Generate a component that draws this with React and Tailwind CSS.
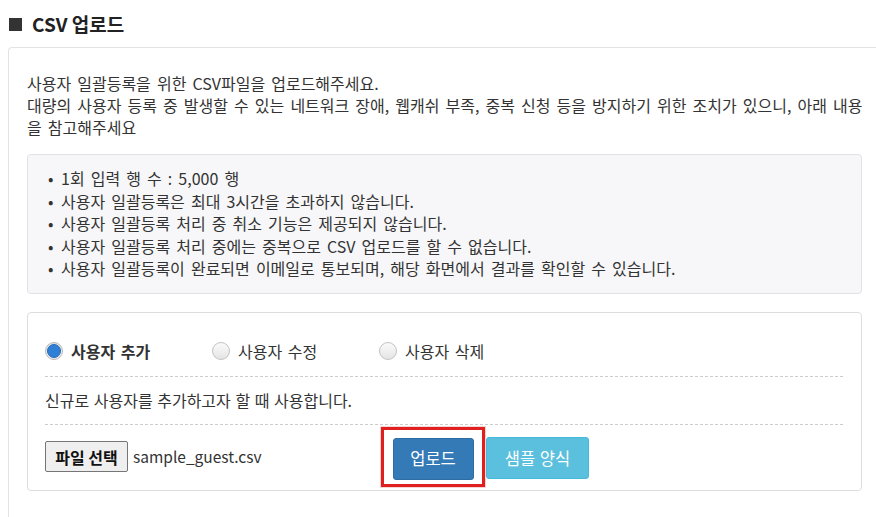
import React from "react";

function Radio({ checked, label }) {
  return (
    <div className="flex items-center w-[167px]">
      {checked ? (
        <span className="w-[18px] h-[18px] rounded-full border border-[#b9b9b9] bg-[#f0f0f0] flex items-center justify-center shadow-[inset_0_1px_1px_rgba(0,0,0,0.1)]">
          <span className="w-[14px] h-[14px] rounded-full bg-[#2f7fd6] border border-[#2669b8]" />
        </span>
      ) : (
        <span className="w-[18px] h-[18px] rounded-full border border-[#c3c3c3] bg-gradient-to-b from-[#fbfbfb] to-[#e4e4e4]" />
      )}
      <span className={"ml-[8px] text-[16px] [word-spacing:2px] text-[#333] " + (checked ? "font-bold" : "")}>{label}</span>
    </div>
  );
}

export default function App() {
  const bullets = [
    "1회 입력 행 수 : 5,000 행",
    "사용자 일괄등록은 최대 3시간을 초과하지 않습니다.",
    "사용자 일괄등록 처리 중 취소 기능은 제공되지 않습니다.",
    "사용자 일괄등록 처리 중에는 중복으로 CSV 업로드를 할 수 없습니다.",
    "사용자 일괄등록이 완료되면 이메일로 통보되며, 해당 화면에서 결과를 확인할 수 있습니다.",
  ];
  return (
    <div
      className="w-[876px] h-[517px] overflow-hidden bg-white text-[#333]"
      style={{ fontFamily: '"Noto Sans CJK KR", "Noto Sans", sans-serif' }}
    >
      <div className="h-[47px] pl-[9px] flex items-center">
        <span className="w-[13px] h-[13px] bg-[#333] mr-[10px] mt-[1px]" />
        <h1 className="text-[19px] font-bold text-[#222] leading-none">CSV 업로드</h1>
      </div>
      <div className="ml-[8px] border-t border-l border-[#e3e3e3] rounded-tl-[4px] pl-[18px] pr-[14px] pt-[24px] h-[470px]">
        <div className="text-[16px] leading-[22px] whitespace-nowrap [word-spacing:2.5px]">
          <div>사용자 일괄등록을 위한 CSV파일을 업로드해주세요.</div>
          <div>대량의 사용자 등록 중 발생할 수 있는 네트워크 장애, 웹캐쉬 부족, 중복 신청 등을 방지하기 위한 조치가 있으니, 아래 내용</div>
          <div>을 참고해주세요</div>
        </div>
        <div className="mt-[16px] bg-[#f7f7f9] border border-[#e1e1e8] rounded-[4px] pl-[20px] pt-[12px] pb-[13px] text-[16px] leading-[22.5px] [word-spacing:2.5px]">
          {bullets.map((b, i) => (
            <div key={i} className="flex whitespace-nowrap">
              <span className="w-[13px] shrink-0">•</span>
              <span>{b}</span>
            </div>
          ))}
        </div>
        <div className="mt-[18px] border border-[#dddddd] rounded-[4px] h-[179px] px-[17px] pt-[27px]">
          <div className="flex items-center h-[22px]">
            <Radio checked label="사용자 추가" />
            <Radio label="사용자 수정" />
            <Radio label="사용자 삭제" />
          </div>
          <div className="mt-[14px] border-t border-dashed border-[#cccccc] w-[798px]" />
          <div className="h-[47px] flex items-center text-[16px] [word-spacing:1px]">신규로 사용자를 추가하고자 할 때 사용합니다.</div>
          <div className="border-t border-dashed border-[#cccccc] w-[798px]" />
          <div className="flex items-center mt-[2px] h-[60px]">
            <div className="w-[336px] flex items-center">
              <button className="h-[31px] w-[83px] bg-[#efefef] border border-[#767676] rounded-[2px] text-[16px] font-bold text-[#111] leading-none">
                파일 선택
              </button>
              <span className="ml-[5px] text-[15.5px]">sample_guest.csv</span>
            </div>
            <div className="border-[3px] border-[#e01f1f] shadow-[0_0_0_1px_#f5d5d5] w-[104px] h-[60px] flex justify-center pt-[8px]">
              <button className="w-[81px] h-[42px] bg-[#337ab7] border border-[#2e6da4] rounded-[3px] text-white text-[16.5px]">
                업로드
              </button>
            </div>
            <button className="ml-[1px] mt-[3px] w-[103px] h-[42px] bg-[#5bc0de] border border-[#46b8da] rounded-[3px] text-white text-[16.5px] [word-spacing:1px]">
              샘플 양식
            </button>
          </div>
        </div>
      </div>
    </div>
  );
}
